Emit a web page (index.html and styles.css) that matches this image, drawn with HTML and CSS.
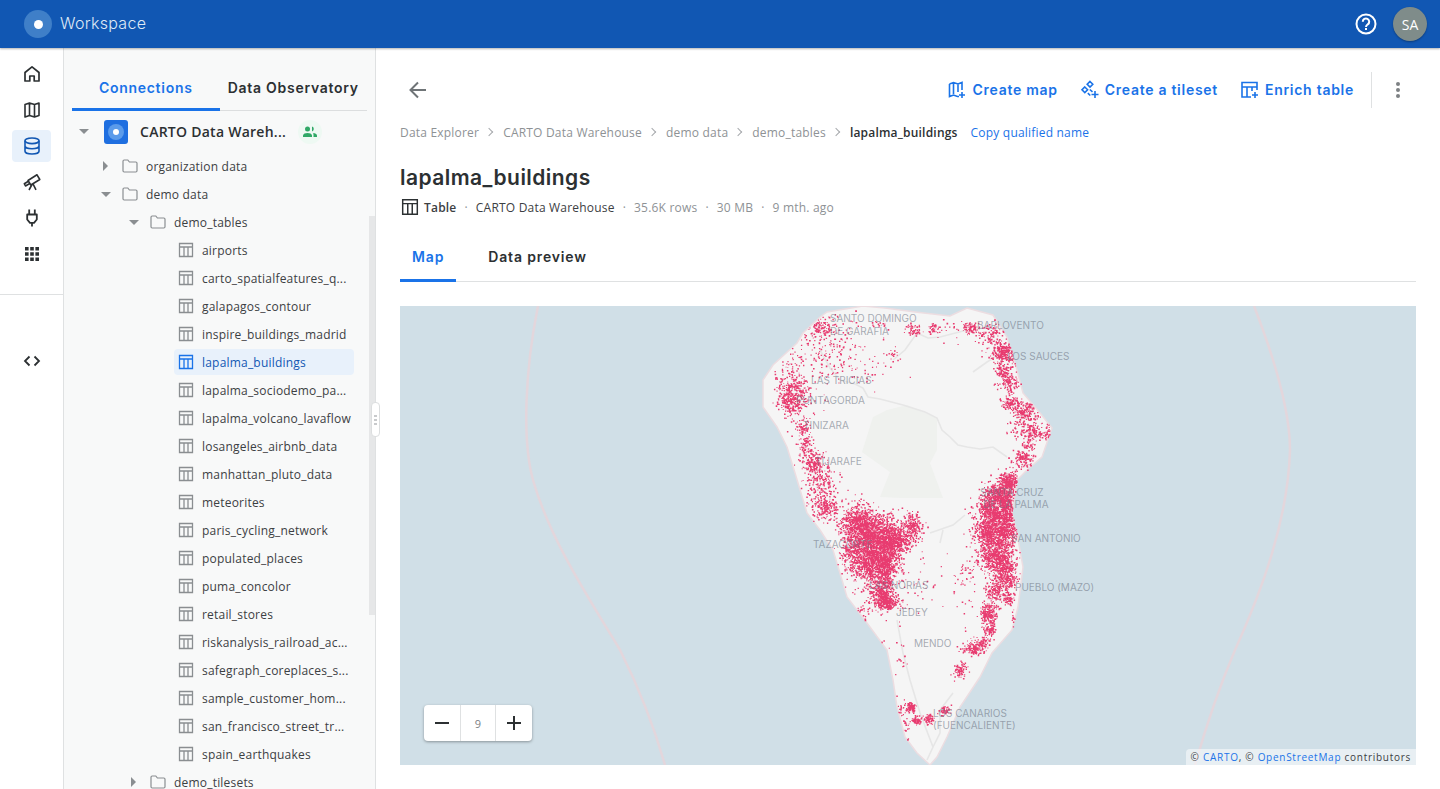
FILE: index.html
```html
<!DOCTYPE html>
<html lang="en">
<head>
    <meta charset="UTF-8">
    <meta name="viewport" content="width=device-width, initial-scale=1.0">
    <title>lapalma_buildings</title>
    <link rel="stylesheet" href="styles.css">
</head>
<body>
    <svg class="icon-defs" width="0" height="0" aria-hidden="true">
        <symbol id="i-table" viewBox="0 0 16 16">
            <path d="M1.5 1.5h13v13h-13zM1.5 5h13M6 5v9.500M10 5v9.500" fill="none" stroke="currentColor" stroke-width="1.300"/>
        </symbol>
        <symbol id="i-folder" viewBox="0 0 16 14">
            <path d="M1 2.200q0-1.200 1.200-1.200h3.600l1.600 2h6.400q1.200 0 1.200 1.200v7.600q0 1.200-1.200 1.200H2.200q-1.200 0-1.200-1.200z" fill="none" stroke="currentColor" stroke-width="1.200"/>
        </symbol>
    </svg>

    <header class="topbar">
        <div class="brand">
            <span class="brand-logo"><span class="brand-dot"></span></span>
            <span class="brand-name">Workspace</span>
        </div>
        <div class="topbar-right">
            <svg class="help" width="24" height="24" viewBox="0 0 24 24">
                <circle cx="12" cy="12" r="9.500" fill="none" stroke="#fff" stroke-width="2"/>
                <path d="M8.800 9.700a3.200 3.200 0 1 1 5 2.600c-1.100.8-1.800 1.300-1.800 2.700" fill="none" stroke="#fff" stroke-width="2"/>
                <rect x="11" y="16" width="2" height="2" fill="#fff"/>
            </svg>
            <span class="avatar">SA</span>
        </div>
    </header>

    <div class="app">
        <nav class="rail">
            <div class="rail-top">
                <a class="rail-item"><svg width="20" height="20" viewBox="0 0 20 20"><path d="M3 8.500 10 2.800l7 5.700V17h-4.800v-5H7.800v5H3z" fill="none" stroke="currentColor" stroke-width="1.700" stroke-linejoin="round"/></svg></a>
                <a class="rail-item"><svg width="20" height="20" viewBox="0 0 20 20"><path d="M3 4.500 7.500 3l5 1.500L17 3v12.500L12.500 17l-5-1.500L3 17zM7.500 3v12.500M12.500 4.500V17" fill="none" stroke="currentColor" stroke-width="1.600" stroke-linejoin="round"/></svg></a>
                <a class="rail-item active"><svg width="20" height="20" viewBox="0 0 20 20"><ellipse cx="10" cy="4.800" rx="7" ry="2.800" fill="none" stroke="currentColor" stroke-width="1.600"/><path d="M3 4.800v10.400c0 1.500 3.100 2.800 7 2.800s7-1.300 7-2.800V4.800M3 10c0 1.500 3.100 2.800 7 2.800s7-1.300 7-2.800" fill="none" stroke="currentColor" stroke-width="1.600"/></svg></a>
                <a class="rail-item"><svg width="20" height="20" viewBox="0 0 20 20"><path d="M6 8.500 15 2.800l2.800 4.700-9 5.500zM6 9.500 2.300 11.700l1.200 2.300 3.800-2.200M10 12.500l-3 5.500M11 11.800l3 6" fill="none" stroke="currentColor" stroke-width="1.600" stroke-linejoin="round"/></svg></a>
                <a class="rail-item"><svg width="20" height="20" viewBox="0 0 20 20"><path d="M7.200 1.500v5M12.800 1.500v5M5.200 6.500h9.600v5L12 14.800H8l-2.800-3.300zM10 14.800v3.700" fill="none" stroke="currentColor" stroke-width="1.800" stroke-linejoin="round"/></svg></a>
                <a class="rail-item"><svg class="grid-icon" width="14" height="14" viewBox="0 0 14 14"><path d="M0 0h3.600v3.600H0zM5.200 0h3.600v3.600H5.200zM10.400 0H14v3.600h-3.600zM0 5.200h3.600v3.600H0zM5.200 5.200h3.600v3.600H5.200zM10.400 5.200H14v3.600h-3.600zM0 10.400h3.600V14H0zM5.200 10.400h3.600V14H5.200zM10.400 10.400H14V14h-3.600z" fill="currentColor"/></svg></a>
            </div>
            <div class="rail-bottom">
                <a class="rail-item"><svg width="20" height="20" viewBox="0 0 20 20"><path d="M7.500 5.500 3 10l4.500 4.500M12.500 5.500 17 10l-4.500 4.500" fill="none" stroke="currentColor" stroke-width="1.800"/></svg></a>
            </div>
        </nav>

        <aside class="explorer">
            <div class="explorer-tabs">
                <div class="explorer-tab active">Connections</div>
                <div class="explorer-tab">Data Observatory</div>
            </div>
            <div class="tree">
                <div class="conn-row">
                    <span class="caret down"></span>
                    <span class="conn-logo"><span class="conn-logo-ring"><span class="conn-logo-dot"></span></span></span>
                    <span class="conn-name">CARTO Data Wareh...</span>
                    <span class="conn-badge">
                        <svg width="14" height="12" viewBox="0 0 14 12"><circle cx="4.500" cy="3" r="2.500" fill="#2fa866"/><path d="M9 .6a2.500 2.500 0 0 1 0 4.800zM0 11V9.500C0 7.800 2.500 7 4.500 7S9 7.800 9 9.500V11zM10.200 7C12 7.200 14 8 14 9.500V11h-3.500V9.300c0-.9-.2-1.700-.3-2.300z" fill="#2fa866"/></svg>
                    </span>
                </div>
                <div class="tree-row level-1"><span class="caret right"></span><svg class="folder"><use href="#i-folder"/></svg><span class="tree-label">organization data</span></div>
                <div class="tree-row level-1"><span class="caret down"></span><svg class="folder"><use href="#i-folder"/></svg><span class="tree-label">demo data</span></div>
                <div class="tree-row level-2"><span class="caret down"></span><svg class="folder"><use href="#i-folder"/></svg><span class="tree-label">demo_tables</span></div>
                <div class="tree-row leaf"><svg class="table-icon"><use href="#i-table"/></svg><span class="tree-label">airports</span></div>
                <div class="tree-row leaf"><svg class="table-icon"><use href="#i-table"/></svg><span class="tree-label">carto_spatialfeatures_q...</span></div>
                <div class="tree-row leaf"><svg class="table-icon"><use href="#i-table"/></svg><span class="tree-label">galapagos_contour</span></div>
                <div class="tree-row leaf"><svg class="table-icon"><use href="#i-table"/></svg><span class="tree-label">inspire_buildings_madrid</span></div>
                <div class="tree-row leaf selected"><svg class="table-icon"><use href="#i-table"/></svg><span class="tree-label">lapalma_buildings</span></div>
                <div class="tree-row leaf"><svg class="table-icon"><use href="#i-table"/></svg><span class="tree-label">lapalma_sociodemo_pa...</span></div>
                <div class="tree-row leaf"><svg class="table-icon"><use href="#i-table"/></svg><span class="tree-label">lapalma_volcano_lavaflow</span></div>
                <div class="tree-row leaf"><svg class="table-icon"><use href="#i-table"/></svg><span class="tree-label">losangeles_airbnb_data</span></div>
                <div class="tree-row leaf"><svg class="table-icon"><use href="#i-table"/></svg><span class="tree-label">manhattan_pluto_data</span></div>
                <div class="tree-row leaf"><svg class="table-icon"><use href="#i-table"/></svg><span class="tree-label">meteorites</span></div>
                <div class="tree-row leaf"><svg class="table-icon"><use href="#i-table"/></svg><span class="tree-label">paris_cycling_network</span></div>
                <div class="tree-row leaf"><svg class="table-icon"><use href="#i-table"/></svg><span class="tree-label">populated_places</span></div>
                <div class="tree-row leaf"><svg class="table-icon"><use href="#i-table"/></svg><span class="tree-label">puma_concolor</span></div>
                <div class="tree-row leaf"><svg class="table-icon"><use href="#i-table"/></svg><span class="tree-label">retail_stores</span></div>
                <div class="tree-row leaf"><svg class="table-icon"><use href="#i-table"/></svg><span class="tree-label">riskanalysis_railroad_ac...</span></div>
                <div class="tree-row leaf"><svg class="table-icon"><use href="#i-table"/></svg><span class="tree-label">safegraph_coreplaces_s...</span></div>
                <div class="tree-row leaf"><svg class="table-icon"><use href="#i-table"/></svg><span class="tree-label">sample_customer_hom...</span></div>
                <div class="tree-row leaf"><svg class="table-icon"><use href="#i-table"/></svg><span class="tree-label">san_francisco_street_tr...</span></div>
                <div class="tree-row leaf"><svg class="table-icon"><use href="#i-table"/></svg><span class="tree-label">spain_earthquakes</span></div>
                <div class="tree-row level-2"><span class="caret right"></span><svg class="folder"><use href="#i-folder"/></svg><span class="tree-label">demo_tilesets</span></div>
            </div>
            <div class="scroll-thumb"></div>
            <div class="resize-handle"><span></span><span></span><span></span></div>
        </aside>

        <main class="content">
            <div class="toolbar">
                <svg class="back" width="24" height="24" viewBox="0 0 24 24"><path d="M20 12H5M12 4.500 4.500 12l7.500 7.500" fill="none" stroke="#6f7477" stroke-width="2"/></svg>
                <div class="actions">
                    <a class="action"><svg width="20" height="20" viewBox="0 0 20 20"><path d="M1.500 4 5.500 2.500l4.500 1.500 4-1.500V10M10 4v8M5.500 2.500v11.500M1.500 4v12.500l4-1.500 4 1.500h1.500M14 12v6M11 15h6" fill="none" stroke="currentColor" stroke-width="1.600"/></svg>Create map</a>
                    <a class="action"><svg width="20" height="20" viewBox="0 0 20 20"><path d="M10 1.500 12.800 4.300 10 7.100 7.200 4.300zM4.800 7 7.600 9.800 4.800 12.600 2 9.800zM9.800 9.500l2.700 2.300M7.800 13.200l2.500 2.300M15 11v7M11.500 14.500h7" fill="none" stroke="currentColor" stroke-width="1.600"/></svg>Create a tileset</a>
                    <a class="action"><svg width="20" height="20" viewBox="0 0 20 20"><path d="M11 17H2V2.500h15V10M2 7h15M7 7v10M12 7v4M15 12v6M12 15h6" fill="none" stroke="currentColor" stroke-width="1.600"/></svg>Enrich table</a>
                    <span class="toolbar-sep"></span>
                    <span class="more"><i></i><i></i><i></i></span>
                </div>
            </div>

            <div class="crumbs">
                <span>Data Explorer</span><span class="crumb-sep"></span>
                <span>CARTO Data Warehouse</span><span class="crumb-sep"></span>
                <span>demo data</span><span class="crumb-sep"></span>
                <span>demo_tables</span><span class="crumb-sep"></span>
                <span class="crumb-current">lapalma_buildings</span>
                <a class="copy-link">Copy qualified name</a>
            </div>

            <h1 class="title">lapalma_buildings</h1>

            <div class="meta">
                <svg class="meta-icon"><use href="#i-table"/></svg>
                <span class="meta-type">Table</span><span class="dot">·</span>
                <span class="meta-source">CARTO Data Warehouse</span><span class="dot">·</span>
                <span>35.6K rows</span><span class="dot">·</span>
                <span>30 MB</span><span class="dot">·</span>
                <span>9 mth. ago</span>
            </div>

            <div class="tabs">
                <div class="tab active">Map</div>
                <div class="tab">Data preview</div>
            </div>

            <div class="map">
                <svg id="map-svg" class="map-svg" width="1016" height="459" viewBox="400 306 1016 459">
                    <path class="reef" d="M538 306C525 370 522 440 533 480 550 540 590 600 620 650 640 690 655 730 665 765"/>
                    <path class="reef" d="M1254 306C1275 360 1290 410 1290 450 1288 520 1262 590 1235 650 1218 690 1205 730 1195 765"/>
                    <path id="island" class="island" d="M803 333 820 317 827 312 863 306 885 308 915 312 950 316 967 308 993 315 1007 337 1017 370 1023 393 1040 413 1052 428 1042 457 1027 470 1017 480 1012 513 1017 533 1023 567 1018 607 1012 630 992 653 980 677 960 707 947 737 937 757 930 765 917 753 905 737 897 707 893 680 887 650 867 623 847 597 842 580 833 550 820 530 807 513 795 473 787 447 777 427 763 407 763 380 773 365 797 343z"/>
                    <path class="park" d="M873 417 887 410 907 405 937 418 937 450 930 463 943 498 900 498 880 497 890 472 862 452z"/>
                    <path class="road" d="M820 350 830 368 840 380 855 384 863 388 868 397 880 399 903 405 925 412 937 418 942 430 950 437 958 445 967 447 980 449 993 447 1007 457"/>
                    <path class="road" d="M893 360 905 350 917 333 928 338 940 337 967 330"/>
                    <path class="road" d="M973 372 987 362 1007 350"/>
                    <path class="road" d="M930 533 953 525 965 515M943 530 940 543"/>
                    <path class="road" d="M897 620 903 653 910 680 920 713 933 747 927 760M953 693 940 710 940 733 933 747"/>
                    <path id="buildings" class="buildings"/>
                    <g class="labels">
                        <text x="830" y="322">SANTO DOMINGO</text>
                        <text x="830" y="335">DE GARAFÍA</text>
                        <text x="977" y="329">BARLOVENTO</text>
                        <text x="1007" y="360">LOS SAUCES</text>
                        <text x="811" y="384">LAS TRICIAS</text>
                        <text x="796" y="404">PUNTAGORDA</text>
                        <text x="803" y="429">TINIZARA</text>
                        <text x="815" y="465">TIJARAFE</text>
                        <text x="980" y="496">SANTA CRUZ</text>
                        <text x="983" y="508">DE LA PALMA</text>
                        <text x="1011" y="542">SAN ANTONIO</text>
                        <text x="813" y="548">TAZACORTE</text>
                        <text x="869" y="589">LAS NORIAS</text>
                        <text x="1015" y="591">PUEBLO (MAZO)</text>
                        <text x="896" y="616">JEDEY</text>
                        <text x="914" y="647">MENDO</text>
                        <text x="933" y="717">LOS CANARIOS</text>
                        <text x="933" y="729">(FUENCALIENTE)</text>
                    </g>
                </svg>
                <div class="zoom-control">
                    <span class="zoom-btn"><svg width="16" height="16" viewBox="0 0 16 16"><path d="M1 8h14" stroke="#2c3032" stroke-width="2"/></svg></span>
                    <span class="zoom-level">9</span>
                    <span class="zoom-btn"><svg width="16" height="16" viewBox="0 0 16 16"><path d="M1 8h14M8 1v14" stroke="#2c3032" stroke-width="2"/></svg></span>
                </div>
                <div class="attribution">© <a>CARTO</a>, © <a>OpenStreetMap</a> contributors</div>
            </div>
        </main>
    </div>
    <script src="map.js"></script>
</body>
</html>
```
FILE: styles.css
```css
* {
    box-sizing: border-box;
}
html, body {
    height: 100%;
}
body {
    margin: 0;
    font-family: "Open Sans", Arial, sans-serif;
    color: #2c3032;
    background: #fff;
    overflow: hidden;
}
.icon-defs {
    position: absolute;
}

/* top bar */
.topbar {
    height: 48px;
    background: #1157b3;
    display: flex;
    align-items: center;
    justify-content: space-between;
    padding: 0 13px 0 24px;
    box-shadow: 0 1px 2px rgba(0,0,0,0.3);
    position: relative;
    z-index: 2;
}
.brand {
    display: flex;
    align-items: center;
    gap: 8px;
}
.brand-logo {
    width: 28px;
    height: 28px;
    border-radius: 50%;
    background: #3f7fc8;
    display: flex;
    align-items: center;
    justify-content: center;
}
.brand-dot {
    width: 9px;
    height: 9px;
    border-radius: 50%;
    background: #fff;
}
.brand-name {
    font-family: Inter, sans-serif;
    font-size: 16px;
    font-weight: 300;
    letter-spacing: 0.3px;
    color: #dfe9f6;
    margin-top: -2px;
}
.topbar-right {
    display: flex;
    align-items: center;
    gap: 15px;
}
.help {
    display: block;
}
.avatar {
    width: 34px;
    height: 34px;
    border-radius: 50%;
    background: #7f8c8a;
    color: #fff;
    font-size: 14px;
    display: flex;
    align-items: center;
    justify-content: center;
    box-shadow: 0 1px 2px rgba(0,0,0,0.3);
}

.app {
    display: flex;
    height: 741px;
}

/* left rail */
.rail {
    width: 64px;
    flex: none;
    border-right: 1px solid #dfe1e2;
    background: #fff;
}
.rail-top {
    padding: 10px 12px 22px;
    border-bottom: 1px solid #dfe1e2;
    display: flex;
    flex-direction: column;
    gap: 4px;
    height: 247px;
}
.rail-bottom {
    padding: 50px 12px 0;
}
.rail-item {
    width: 39px;
    height: 32px;
    border-radius: 4px;
    display: flex;
    align-items: center;
    justify-content: center;
    color: #2c3032;
}
.rail-item.active {
    background: #e8f1fb;
    color: #1157b3;
}

/* connections panel */
.explorer {
    width: 312px;
    flex: none;
    background: #f8f9f9;
    border-right: 1px solid #dfe1e2;
    padding: 16px 8px 0;
    position: relative;
    overflow: visible;
}
.explorer-tabs {
    display: flex;
    height: 47px;
    border-bottom: 1px solid #dcdedf;
}
.explorer-tab {
    width: 148px;
    height: 47px;
    font-family: Inter, sans-serif;
    font-size: 14px;
    font-weight: 600;
    letter-spacing: 0.72px;
    text-align: center;
    line-height: 48px;
    white-space: nowrap;
}
.explorer-tab.active {
    color: #1a73e8;
    border-bottom: 3px solid #1a73e8;
}
.tree {
    height: 678px;
    overflow: hidden;
    padding-top: 7px;
}
.conn-row {
    height: 27px;
    display: flex;
    align-items: center;
    padding-left: 7px;
}
.conn-logo {
    width: 24px;
    height: 24px;
    margin-left: 15px;
    border-radius: 3px;
    background: #1f6fe0;
    display: flex;
    align-items: center;
    justify-content: center;
}
.conn-logo-ring {
    width: 16px;
    height: 16px;
    border-radius: 50%;
    background: #5b9bea;
    display: flex;
    align-items: center;
    justify-content: center;
}
.conn-logo-dot {
    width: 6px;
    height: 6px;
    border-radius: 50%;
    background: #fff;
}
.conn-name {
    margin-left: 12px;
    font-size: 14px;
    font-weight: 600;
    letter-spacing: 0.26px;
    white-space: nowrap;
}
.conn-badge {
    width: 24px;
    height: 24px;
    margin-left: 12px;
    border-radius: 50%;
    background: #eef9f3;
    display: flex;
    align-items: center;
    justify-content: center;
}
.caret {
    width: 0;
    height: 0;
    flex: none;
}
.caret.down {
    border-left: 5px solid transparent;
    border-right: 5px solid transparent;
    border-top: 5px solid #8a8e91;
}
.caret.right {
    border-top: 5px solid transparent;
    border-bottom: 5px solid transparent;
    border-left: 5px solid #8a8e91;
}
.tree-row {
    height: 26px;
    margin-top: 2px;
    display: flex;
    align-items: center;
    font-size: 12px;
    color: #3c4043;
    white-space: nowrap;
    border-radius: 4px;
}
.conn-row + .tree-row {
    margin-top: 8px;
}
.tree-row .caret.down {
    margin-right: 11px;
}
.tree-row .caret.right {
    margin-right: 14px;
    margin-left: 2px;
}
.level-1 {
    padding-left: 29px;
}
.level-2 {
    padding-left: 57px;
}
.leaf {
    margin-left: 102px;
    width: 180px;
    padding-left: 4px;
}
.folder {
    width: 16px;
    height: 14px;
    color: #8a8e91;
    flex: none;
}
.tree-label {
    letter-spacing: 0.2px;
}
.folder + .tree-label {
    margin-left: 8px;
}
.table-icon {
    width: 16px;
    height: 16px;
    color: #8a8e91;
    flex: none;
    margin-right: 8px;
}
.selected {
    background: #e8f1fb;
    color: #1157b3;
}
.selected .table-icon {
    color: #1a73e8;
}
.scroll-thumb {
    position: absolute;
    right: 0;
    top: 168px;
    width: 6px;
    height: 399px;
    background: #e6e7e8;
}
.resize-handle {
    position: absolute;
    right: -5px;
    top: 354px;
    width: 9px;
    height: 35px;
    background: #fff;
    border: 1px solid #dcdedf;
    border-radius: 4px;
    display: flex;
    flex-direction: column;
    align-items: center;
    justify-content: center;
    gap: 2px;
    z-index: 1;
}
.resize-handle span {
    width: 3px;
    height: 2px;
    background: #c8cacc;
}

/* main area */
.content {
    flex: 1;
    min-width: 0;
    padding: 24px 24px 0;
}
.toolbar {
    height: 36px;
    display: flex;
    align-items: center;
    justify-content: space-between;
}
.back {
    margin-left: 6px;
}
.actions {
    display: flex;
    align-items: center;
    height: 36px;
}
.action {
    display: flex;
    align-items: center;
    gap: 5px;
    font-family: Inter, sans-serif;
    font-size: 14px;
    font-weight: 600;
    letter-spacing: 0.72px;
    color: #1a73e8;
    margin-left: 22px;
    padding-bottom: 1px;
    white-space: nowrap;
}
.toolbar-sep {
    width: 1px;
    height: 36px;
    background: #dfe1e2;
    margin-left: 17px;
}
.more {
    width: 18px;
    margin-left: 17px;
    margin-right: 9px;
    display: flex;
    flex-direction: column;
    align-items: center;
    gap: 2px;
}
.more i {
    width: 4px;
    height: 4px;
    border-radius: 50%;
    background: #7d8184;
}
.crumbs {
    display: flex;
    align-items: center;
    height: 18px;
    margin-top: 15px;
    font-size: 12px;
    letter-spacing: 0.2px;
    color: #8e9295;
    white-space: nowrap;
}
.crumb-sep {
    width: 6px;
    height: 6px;
    border-top: 1px solid #a6a9ac;
    border-right: 1px solid #a6a9ac;
    transform: rotate(45deg);
    margin: 0 11px 0 7px;
}
.crumb-current {
    color: #2c3032;
    font-weight: 600;
}
.copy-link {
    color: #1a73e8;
    margin-left: 13px;
}
.title {
    margin: 23px 0 0;
    height: 28px;
    font-family: Inter, sans-serif;
    font-size: 21px;
    font-weight: 600;
    line-height: 28px;
    letter-spacing: 0.45px;
}
.meta {
    display: flex;
    align-items: center;
    height: 18px;
    margin-top: 6px;
    font-size: 12px;
    letter-spacing: 0.2px;
    color: #8e9295;
    white-space: nowrap;
}
.meta-icon {
    width: 18px;
    height: 18px;
    color: #2c3032;
    margin-left: 1px;
    margin-right: 5px;
}
.meta-type {
    font-weight: 600;
    color: #3c4043;
}
.meta-source {
    color: #3c4043;
}
.dot {
    margin: 0 8px;
}
.tabs {
    display: flex;
    height: 50px;
    margin-top: 16px;
    border-bottom: 1px solid #dfe1e2;
}
.tab {
    height: 50px;
    padding: 0 12px;
    margin-right: 20px;
    font-family: Inter, sans-serif;
    font-size: 14px;
    font-weight: 600;
    letter-spacing: 0.85px;
    line-height: 50px;
}
.tab.active {
    color: #1a73e8;
    border-bottom: 3px solid #1a73e8;
}

/* map */
.map {
    position: relative;
    height: 459px;
    margin-top: 24px;
    background: #d0dfe7;
    overflow: hidden;
}
.map-svg {
    display: block;
}
.reef {
    fill: none;
    stroke: #e3d6dc;
    stroke-width: 2.500;
}
.island {
    fill: #f5f5f5;
    stroke: #ecdde1;
    stroke-width: 1.500;
}
.park {
    fill: #eff1ee;
}
.road {
    fill: none;
    stroke: #e6e6e6;
    stroke-width: 1.600;
}
.labels text {
    font-family: Inter, sans-serif;
    font-size: 10px;
    fill: #6f7686;
    fill-opacity: 0.6;
}
.buildings {
    fill: #e83c70;
}
.zoom-control {
    position: absolute;
    left: 24px;
    bottom: 24px;
    width: 108px;
    height: 36px;
    background: #fff;
    border-radius: 4px;
    box-shadow: 0 1px 3px rgba(0,0,0,0.35);
    display: flex;
}
.zoom-btn, .zoom-level {
    width: 36px;
    display: flex;
    align-items: center;
    justify-content: center;
}
.zoom-level {
    border-left: 1px solid #dfe1e2;
    border-right: 1px solid #dfe1e2;
    font-size: 11px;
    color: #7d8184;
}
.attribution {
    position: absolute;
    right: 0;
    bottom: 0;
    height: 16px;
    padding: 0 5px;
    background: rgba(255,255,255,0.5);
    border-top-left-radius: 4px;
    font-size: 10px;
    line-height: 16px;
    letter-spacing: 0.72px;
    color: #3c4043;
    white-space: nowrap;
}
.attribution a {
    color: #1a73e8;
}
```
FILE: map.js
```js
// building footprints are approximated by gaussian clusters: x, y, rx, ry, count
var clusters = [
    [792,395,7,11,430],[817,350,18,22,170],[823,327,6,4,90],[847,357,22,17,120],[790,370,10,12,30],
    [913,329,4,3,50],[933,328,3,3,40],[893,355,3,3,18],[950,330,6,6,14],[880,325,6,3,14],
    [970,328,5,3,90],[990,335,7,6,100],[1003,353,7,5,260],[1002,370,5,4,80],[1008,383,5,5,110],
    [1010,402,5,4,90],[1023,413,7,7,200],[1030,432,8,5,150],[1047,433,2,7,30],[1027,445,3,4,35],[1023,458,5,5,110],
    [803,427,3,3,60],[805,447,4,7,90],[813,462,6,6,160],[820,483,9,9,190],[825,507,7,6,190],
    [858,522,9,9,560],[875,535,13,11,1050],[895,540,9,6,460],[913,525,5,5,190],[868,560,11,11,850],
    [885,565,7,11,500],[880,590,7,7,280],[886,602,6,4,240],[850,545,5,9,120],[863,610,7,6,35],
    [1008,480,5,5,230],[1000,493,8,6,450],[990,510,7,7,350],[1005,510,6,7,350],[987,530,7,8,450],
    [1005,530,7,9,450],[995,555,9,9,600],[1005,575,6,9,340],[995,590,5,5,130],[1008,598,3,4,60],
    [988,615,4,8,220],[990,630,3,3,60],[973,648,5,3,130],[982,642,4,3,60],[960,670,3,4,75],[1013,620,1,5,14],
    [911,707,2.500,2.500,90],[916,720,2.500,2,60],[928,719,2.500,2.500,65],[945,710,3,2.500,50],[900,710,2,4,30],[905,730,3,8,20],
    [950,590,30,18,45],[900,650,3,18,18],[880,647,3,3,30],[965,570,6,8,25],[895,585,20,20,45]
];

// outline again, for the point-in-island test
var outline = document.getElementById("island").getAttribute("d").replace(/[Mz]/g, "").trim().split(/\s+/);
var poly = [];
for (var i = 0; i < outline.length; i += 2) {
    poly.push([+outline[i], +outline[i + 1]]);
}

var seed = 4127;
function rand() {
    seed = (seed * 16807) % 2147483647;
    return seed / 2147483647;
}
function gauss() {
    return Math.sqrt(-2 * Math.log(rand() + 1e-9)) * Math.cos(6.2832 * rand());
}
function inside(x, y) {
    var hit = false;
    for (var i = 0, j = poly.length - 1; i < poly.length; j = i++) {
        var a = poly[i], b = poly[j];
        if ((a[1] > y) !== (b[1] > y) && x < (b[0] - a[0]) * (y - a[1]) / (b[1] - a[1]) + a[0]) {
            hit = !hit;
        }
    }
    return hit;
}

var d = [];
clusters.forEach(function (c) {
    for (var n = 0; n < c[4]; n++) {
        var x = c[0] + gauss() * c[2];
        var y = c[1] + gauss() * c[3];
        if (!inside(x, y)) continue;
        var s = 0.9 + rand() * 0.8;
        d.push("M" + x.toFixed(1) + " " + y.toFixed(1) + "h" + s.toFixed(1) + "v" + s.toFixed(1) + "h-" + s.toFixed(1) + "z");
    }
});
document.getElementById("buildings").setAttribute("d", d.join(""));
```
